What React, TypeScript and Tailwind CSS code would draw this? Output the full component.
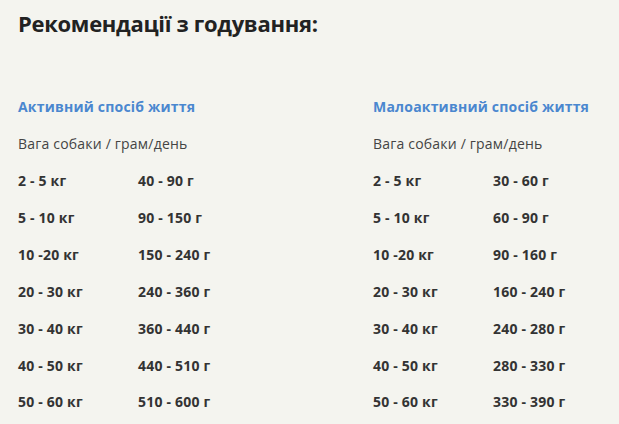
import React from 'react';

interface Row {
  weight: string;
  grams: string;
}

interface Plan {
  title: string;
  rows: Row[];
}

const plans: Plan[] = [
  {
    title: 'Активний спосіб життя',
    rows: [
      { weight: '2 - 5 кг', grams: '40 - 90 г' },
      { weight: '5 - 10 кг', grams: '90 - 150 г' },
      { weight: '10 -20 кг', grams: '150 - 240 г' },
      { weight: '20 - 30 кг', grams: '240 - 360 г' },
      { weight: '30 - 40 кг', grams: '360 - 440 г' },
      { weight: '40 - 50 кг', grams: '440 - 510 г' },
      { weight: '50 - 60 кг', grams: '510 - 600 г' },
    ],
  },
  {
    title: 'Малоактивний спосіб життя',
    rows: [
      { weight: '2 - 5 кг', grams: '30 - 60 г' },
      { weight: '5 - 10 кг', grams: '60 - 90 г' },
      { weight: '10 -20 кг', grams: '90 - 160 г' },
      { weight: '20 - 30 кг', grams: '160 - 240 г' },
      { weight: '30 - 40 кг', grams: '240 - 280 г' },
      { weight: '40 - 50 кг', grams: '280 - 330 г' },
      { weight: '50 - 60 кг', grams: '330 - 390 г' },
    ],
  },
];

const PlanColumn: React.FC<{ plan: Plan }> = ({ plan }) => (
  <div className="w-[355px] shrink-0 text-[14px] leading-[20px] tracking-[0.2px]">
    <h3 className="font-bold text-[#4a87cf]">{plan.title}</h3>
    <p className="mt-[16.9px] text-[#444]">Вага собаки / грам/день</p>
    <div className="mt-[16.9px] flex flex-col gap-y-[16.9px]">
      {plan.rows.map((row) => (
        <div key={row.weight} className="flex font-bold text-[#333]">
          <span className="w-[120px]">{row.weight}</span>
          <span>{row.grams}</span>
        </div>
      ))}
    </div>
  </div>
);

const App: React.FC = () => {
  return (
    <div
      className="min-h-screen bg-[#f4f4ef] pl-[18px] pt-[10.3px] overflow-hidden"
      style={{ fontFamily: '"Open Sans", "Noto Sans", sans-serif' }}
    >
      <h2 className="text-[22px] leading-[26.4px] tracking-[-0.3px] font-bold text-[#222]">
        Рекомендації з годування:
      </h2>
      <div className="mt-[60.6px] flex">
        {plans.map((plan) => (
          <PlanColumn key={plan.title} plan={plan} />
        ))}
      </div>
    </div>
  );
};

export default App;
